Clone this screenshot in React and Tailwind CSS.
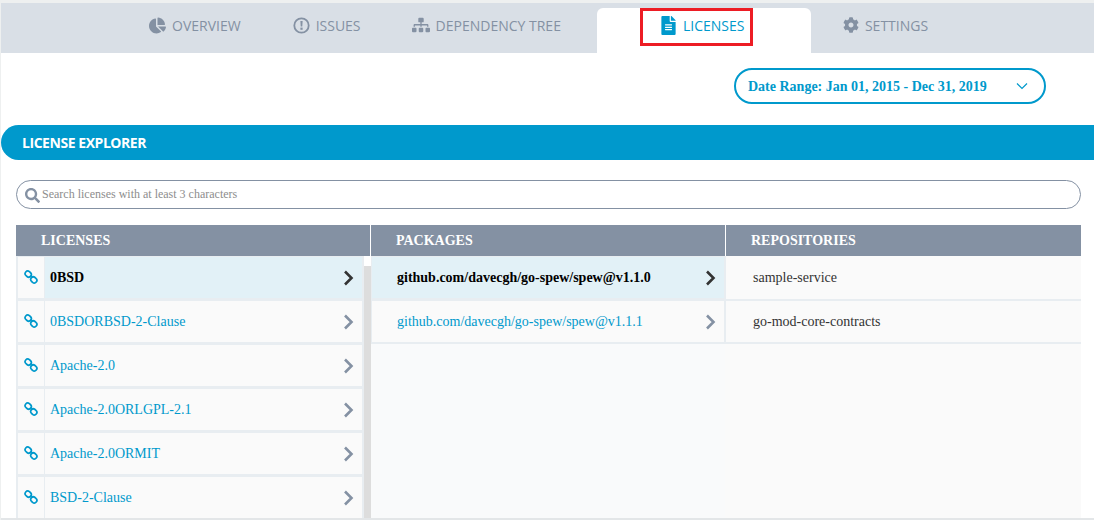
import React from 'react';
import { FaChartPie, FaSitemap, FaFileAlt, FaCog, FaSearch } from 'react-icons/fa';

const licenses = ['0BSD', '0BSDORBSD-2-Clause', 'Apache-2.0', 'Apache-2.0ORLGPL-2.1', 'Apache-2.0ORMIT', 'BSD-2-Clause'];
const packages = ['github.com/davecgh/go-spew/spew@v1.1.0', 'github.com/davecgh/go-spew/spew@v1.1.1'];
const repositories = ['sample-service', 'go-mod-core-contracts'];

const AlertIcon = () => (
  <svg width="17" height="17" viewBox="0 0 17 17" fill="none">
    <circle cx="8.5" cy="8.5" r="7.2" stroke="currentColor" strokeWidth="1.8" />
    <path d="M7.4 4h2.2l-.3 5.6H7.7z" fill="currentColor" />
    <rect x="7.4" y="10.6" width="2.2" height="2.2" fill="currentColor" />
  </svg>
);

const LinkIcon = () => (
  <svg width="14" height="14" viewBox="0 0 14 14" fill="none" stroke="#0099cc" strokeWidth="1.7">
    <rect x="1" y="1.5" width="6.4" height="5.2" rx="2.6" transform="rotate(40 4.2 4.1)" />
    <rect x="6.6" y="7.3" width="6.4" height="5.2" rx="2.6" transform="rotate(40 9.8 9.9)" />
    <path d="M6.4 6.2l1.2 1.2" />
  </svg>
);

const Arrow = ({ active }) => (
  <svg width="11" height="16" viewBox="0 0 11 16" fill="none" className="shrink-0">
    <path d="M2 1.5L8.5 8L2 14.5" stroke={active ? '#333333' : '#8491a3'} strokeWidth="2.6" />
  </svg>
);

const LicenseRow = ({ name, active }) => (
  <div className="flex h-[41px] shrink-0">
    <div className="w-[26px] bg-[#fafafa] flex justify-center pt-[13px] shrink-0">
      <LinkIcon />
    </div>
    <div className={`flex-1 ml-px pl-[5px] pr-[8px] flex items-center justify-between text-[14px] ${active ? 'bg-[#e2f1f7] text-black font-bold' : 'bg-[#fafafa] text-[#0099cc]'}`}>
      <span>{name}</span>
      <Arrow active={active} />
    </div>
  </div>
);

const PackageRow = ({ name, active }) => (
  <div className={`h-[41px] pl-[25px] pr-[8px] flex items-center justify-between text-[14px] shrink-0 ${active ? 'bg-[#e2f1f7] text-black font-bold' : 'bg-[#fafafa] text-[#0099cc]'}`}>
    <span>{name}</span>
    <Arrow active={active} />
  </div>
);

export default function App() {
  return (
    <div className="h-[520px] w-[1094px] overflow-hidden bg-white flex flex-col border-l border-[#eef0f0] font-['Liberation_Serif',serif]">
      {/* tabs */}
      <div className="h-[3px] -ml-px bg-[#eef0f0] shrink-0" />
      <nav className="h-[50px] bg-[#d9dfe6] flex shrink-0 text-[14px] text-[#8491a3] font-['Open_Sans',sans-serif]">
        <div className="ml-[148px] flex items-center gap-[6px] pb-[6px]">
          <FaChartPie size={17} />
          <span>OVERVIEW</span>
        </div>
        <div className="ml-[52px] flex items-center gap-[6px] pb-[6px]">
          <AlertIcon />
          <span>ISSUES</span>
        </div>
        <div className="ml-[51px] flex items-center gap-[6px] pb-[6px]">
          <FaSitemap size={18} />
          <span>DEPENDENCY TREE</span>
        </div>
        <div className="ml-[36px] mt-[5px] w-[214px] bg-white rounded-t-[6px] pl-[43px]">
          <div className="w-[113px] h-[38px] border-[3px] border-[#ed1c24] flex items-center pl-[16px] pb-[4px] gap-[5px] text-[#0099cc]">
            <FaFileAlt size={19} className="shrink-0" />
            <span>LICENSES</span>
          </div>
        </div>
        <div className="ml-[32px] flex items-center gap-[6px] pb-[6px]">
          <FaCog size={16} />
          <span>SETTINGS</span>
        </div>
      </nav>

      {/* date range */}
      <div className="flex justify-end pr-[48px] pt-[15px] shrink-0">
        <div className="w-[312px] h-[36px] border-2 border-[#0099cc] rounded-full flex items-center justify-between pl-[12px] pr-[16px] text-[14px] font-bold text-[#0099cc]">
          <span>Date Range: Jan 01, 2015 - Dec 31, 2019</span>
          <svg width="12" height="8" viewBox="0 0 12 8" fill="none">
            <path d="M1 1.5L6 6.5L11 1.5" stroke="#0099cc" strokeWidth="1.2" />
          </svg>
        </div>
      </div>

      {/* banner */}
      <div className="mt-[21px] h-[35px] bg-[#0099cc] rounded-l-[18px] flex items-center pl-[21px] text-white text-[14px] font-bold tracking-[-0.45px] shrink-0 font-['Open_Sans',sans-serif]">
        LICENSE EXPLORER
      </div>

      {/* search */}
      <div className="mt-[20px] ml-[15px] w-[1065px] h-[29px] border border-[#8491a3] rounded-full flex items-center pl-[8px] pb-[2px] gap-[2px] text-[12px] text-[#8d8d8d] shrink-0">
        <FaSearch size={15} className="text-[#8491a3] mt-[4px]" />
        <span>Search licenses with at least 3 characters</span>
      </div>

      {/* explorer */}
      <div className="mt-[16px] ml-[15px] w-[1065px] grid grid-cols-[354px_355px_356px] h-[31px] shrink-0">
        <div className="bg-[#8491a3] text-white font-bold text-[14px] flex items-center pl-[25px]">LICENSES</div>
        <div className="bg-[#8491a3] text-white font-bold text-[14px] flex items-center pl-[25px] border-l border-white">PACKAGES</div>
        <div className="bg-[#8491a3] text-white font-bold text-[14px] flex items-center pl-[25px] border-l border-white">REPOSITORIES</div>
      </div>
      <div className="ml-[15px] w-[1065px] flex-1 min-h-0 grid grid-cols-[355px_354px_356px] bg-[#fafafa]">
        <div className="flex overflow-hidden bg-[#e8edf1] pl-[2px]">
          <div className="w-[344px] pt-px flex flex-col gap-[3px] shrink-0">
            {licenses.map((name, i) => (
              <LicenseRow key={name} name={name} active={i === 0} />
            ))}
          </div>
          <div className="w-[7px] ml-[2px] flex flex-col shrink-0">
            <div className="h-[10px] bg-white" />
            <div className="flex-1 bg-[#dddddd]" />
          </div>
        </div>

        <div className="flex flex-col overflow-hidden bg-[#f9fafb]">
          <div className="flex flex-col gap-[3px] bg-[#e8edf1] px-px pt-px pb-[2px]">
            {packages.map((name, i) => (
              <PackageRow key={name} name={name} active={i === 0} />
            ))}
          </div>
        </div>

        <div className="flex flex-col overflow-hidden">
          {repositories.map((name, i) => (
            <div key={name} className={`${i === 0 ? 'h-[45px]' : 'h-[43px]'} pl-[27px] flex items-center text-[14px] text-[#333333] bg-[#fafafa] border-b-2 border-l border-[#e8edf1]`}>
              {name}
            </div>
          ))}
        </div>
      </div>
      <div className="h-[2px] -ml-px bg-[#e3e6e8] shrink-0" />
    </div>
  );
}
